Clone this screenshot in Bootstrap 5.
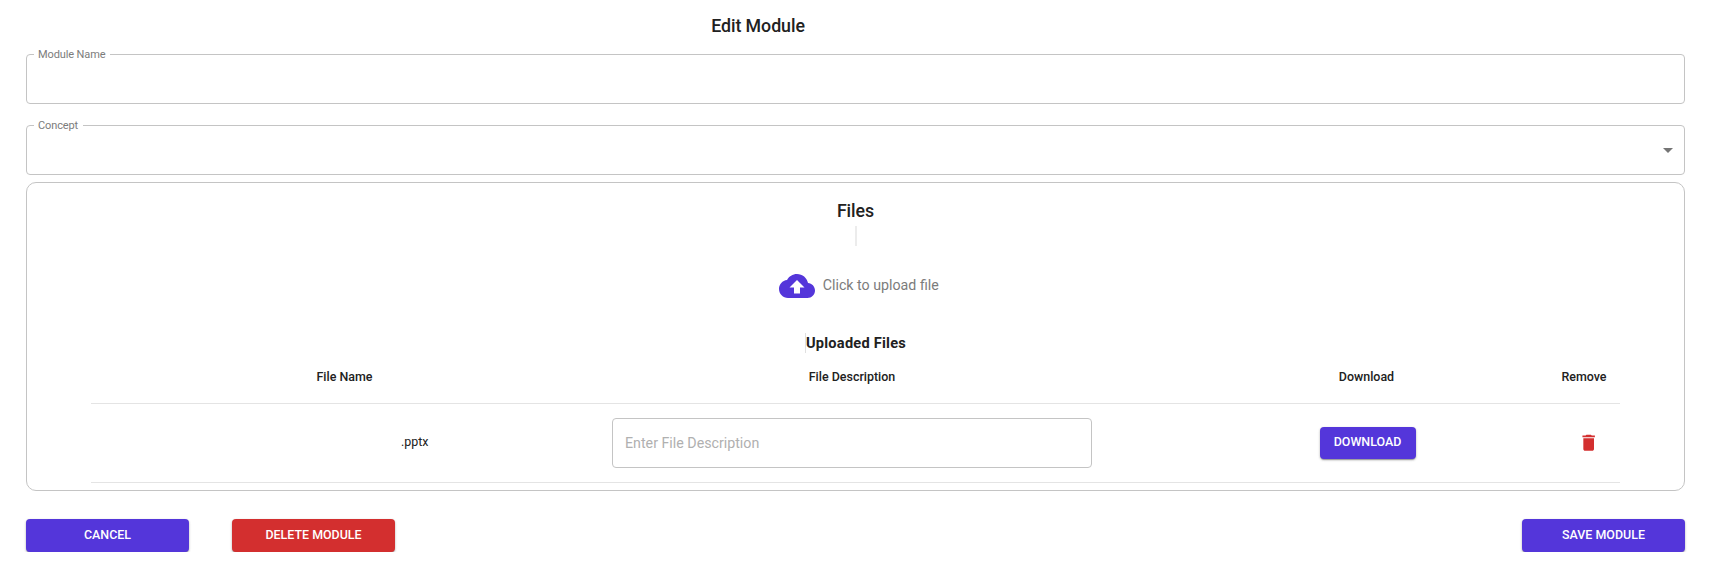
<!DOCTYPE html>
<html lang="en">
<head>
<meta charset="utf-8">
<meta name="viewport" content="width=device-width, initial-scale=1">
<title>Edit Module</title>
<link href="https://cdn.jsdelivr.net/npm/bootstrap@5.3.0/dist/css/bootstrap.min.css" rel="stylesheet">
<style>
  body { font-family: Roboto, "Liberation Sans", sans-serif; font-size: 14.22px; color: #212121; background: #fff; letter-spacing: 0; overflow: hidden; }
  .page { padding: 0 26px; }
  .page-title { width: 1464px; height: 54px; padding-top: 12px; }
  .heading { font-size: 17.78px; font-weight: 500; line-height: 28px; letter-spacing: -.003em; margin: 0; }
  .outlined { height: 50px; border: 1px solid #c4c4c4; border-radius: 4px; }
  .outlined + .outlined { margin-top: 21px; }
  .outlined input { border: 0; outline: 0; background: transparent; width: 100%; height: 100%; padding: 0 0 0 12px; letter-spacing: 0; }
  .outlined input::placeholder { color: #b0b0b0; opacity: 1; }
  .notch { position: absolute; left: 7px; top: -8px; padding: 0 5px 0 4px; background: #fff; color: #7c7c7c; font-size: 11px; line-height: 15px; letter-spacing: -.01em; }
  .caret { position: absolute; right: 11px; top: 22px; border: 5px solid transparent; border-top-color: #757575; border-bottom: 0; }
  .panel { height: 309px; margin-top: 7px; border: 1px solid #c4c4c4; border-radius: 10px; padding: 14px 64px 0; }
  .tick { width: 2px; height: 20px; background: #ececec; margin-top: 1px; }
  .upload { height: 36px; margin: 22px 0 0 7px; gap: 7.5px; color: #7c7c7c; }
  .uploaded { font-weight: 700; font-size: 14.6px; height: 20px; line-height: 21px; letter-spacing: .016em; margin-top: 29px; border-left: 1px solid #e0e0e0; }
  .file-row { display: grid; grid-template-columns: 507px 508px 79px 363px 72px; align-items: center; border-bottom: 1px solid #e4e4e4; font-size: 12.44px; }
  .file-head { height: 51px; font-weight: 500; padding-bottom: 1px; }
  .file-item { height: 79px; }
  .file-name { padding: 0 0 1px 310px; }
  .file-input { margin: 0 14px; font-size: 14.22px; }
  .file-download { padding-left: 2px; }
  .file-remove { padding-left: 10px; }
  .btn-mui { --bs-btn-color: #fff; --bs-btn-hover-color: #fff; --bs-btn-active-color: #fff; --bs-btn-bg: #5436da; --bs-btn-hover-bg: #4527c0; --bs-btn-active-bg: #4527c0; border: 0; border-radius: 4px; padding: 0 0 2px; font-size: 12.44px; font-weight: 500; line-height: 29px; letter-spacing: 0; text-transform: uppercase; height: 33px; width: 163px; box-shadow: 0 2px 1px -1px rgba(0,0,0,.2), 0 1px 2px rgba(0,0,0,.22), 0 1px 3px rgba(0,0,0,.12); }
  .btn-small { width: 96px; height: 32px; line-height: 28px; }
  .btn-remove { --bs-btn-bg: #d32f2f; --bs-btn-hover-bg: #b52525; --bs-btn-active-bg: #b52525; }
  .actions { margin-top: 28px; gap: 43px; }
</style>
</head>
<body>
<main class="page">
  <header class="page-title text-center"><h1 class="heading">Edit Module</h1></header>
  <div class="outlined position-relative">
    <label class="notch" for="name">Module Name</label>
    <input id="name" type="text">
  </div>
  <div class="outlined position-relative">
    <label class="notch" for="concept">Concept</label>
    <input id="concept" type="text">
    <span class="caret"></span>
  </div>

  <section class="panel">
    <div class="d-flex flex-column align-items-center">
      <h2 class="heading">Files</h2>
      <div class="tick"></div>
      <div class="upload d-flex align-items-center">
        <svg width="36" height="36" viewBox="0 0 24 24" fill="#5436da"><path d="M19.35 10.04C18.67 6.59 15.64 4 12 4 9.11 4 6.6 5.64 5.35 8.04 2.34 8.36 0 10.91 0 14c0 3.31 2.69 6 6 6h13c2.76 0 5-2.24 5-5 0-2.64-2.05-4.78-4.65-4.96zM14 13v4h-4v-4H7l5-5 5 5h-3z"/></svg>
        <span>Click to upload file</span>
      </div>
      <div class="uploaded">Uploaded Files</div>
    </div>
    <div class="file-row file-head text-center">
      <span>File Name</span><span>File Description</span><span></span><span>Download</span><span>Remove</span>
    </div>
    <div class="file-row file-item">
      <span class="file-name">.pptx</span>
      <div class="outlined file-input"><input type="text" placeholder="Enter File Description"></div>
      <span></span>
      <div class="file-download text-center"><button class="btn btn-mui btn-small">Download</button></div>
      <div class="file-remove d-flex justify-content-center">
        <svg width="21.33" height="21.33" viewBox="0 0 24 24" fill="#d32f2f"><path d="M6 19c0 1.1.9 2 2 2h8c1.1 0 2-.9 2-2V7H6v12zM19 4h-3.500l-1-1h-5l-1 1H5v2h14V4z"/></svg>
      </div>
    </div>
  </section>

  <div class="actions d-flex">
    <button class="btn btn-mui">Cancel</button>
    <button class="btn btn-mui btn-remove">Delete Module</button>
    <button class="btn btn-mui ms-auto">Save Module</button>
  </div>
</main>
<script src="https://cdn.jsdelivr.net/npm/bootstrap@5.3.0/dist/js/bootstrap.bundle.min.js"></script>
</body>
</html>
